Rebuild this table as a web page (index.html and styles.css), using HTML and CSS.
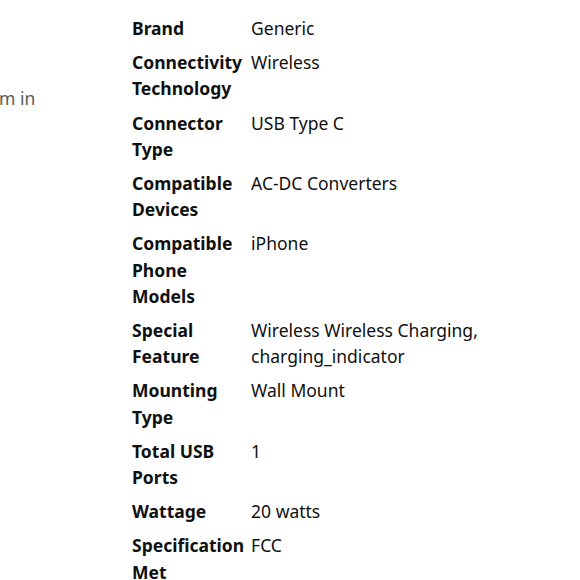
FILE: index.html
```html
<!DOCTYPE html>
<html>
<head>
<meta charset="utf-8">
<link rel="stylesheet" href="styles.css">
</head>
<body>
<div class="page">
  <div class="side"><p class="side-text">m in</p></div>
  <table class="specs">
    <tr><th>Brand</th><td>Generic</td></tr>
    <tr><th>Connectivity Technology</th><td>Wireless</td></tr>
    <tr><th>Connector Type</th><td>USB Type C</td></tr>
    <tr><th>Compatible Devices</th><td>AC-DC Converters</td></tr>
    <tr><th>Compatible Phone Models</th><td>iPhone</td></tr>
    <tr><th>Special Feature</th><td>Wireless Wireless Charging, charging_indicator</td></tr>
    <tr><th>Mounting Type</th><td>Wall Mount</td></tr>
    <tr><th>Total USB Ports</th><td>1</td></tr>
    <tr><th>Wattage</th><td>20 watts</td></tr>
    <tr><th>Specification Met</th><td>FCC</td></tr>
  </table>
</div>
</body>
</html>
```
FILE: styles.css
```css
html, body {
  margin: 0;
  padding: 0;
  background: #ffffff;
}
body {
  font-family: "Noto Sans", "Open Sans", sans-serif;
  color: #0f1111;
  font-size: 17.5px;
  line-height: 26.2px;
}
.page {
  display: flex;
  padding-top: 11px;
}
.side {
  width: 132px;
  flex: none;
}
.side-text {
  margin: 74px 0 0 -1px;
  color: #565959;
}
.specs {
  border-collapse: collapse;
  border-spacing: 0;
}
.specs th,
.specs td {
  padding: 4px 0;
  vertical-align: top;
  text-align: left;
}
.specs th {
  font-weight: 700;
  width: 112px;
  padding-right: 7px;
}
.specs td {
  font-weight: 400;
  width: 240px;
}
```
